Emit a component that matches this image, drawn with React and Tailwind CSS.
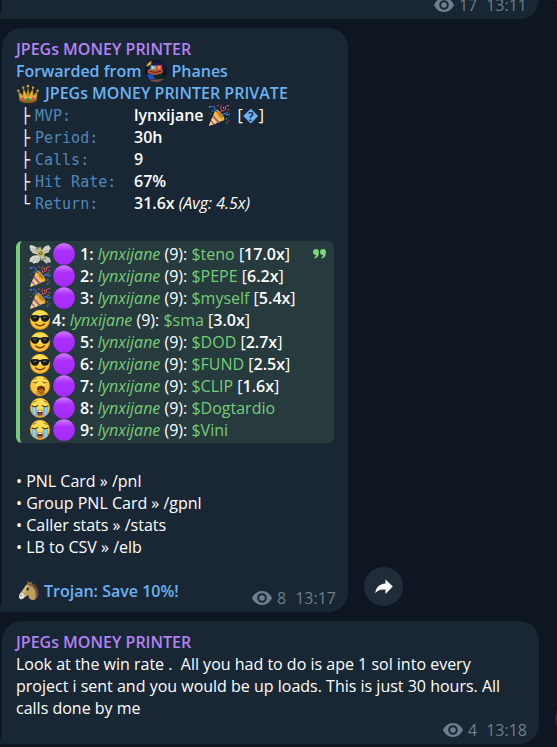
import React from "react";

function Emoji({ label, children, className = "" }) {
  return (
    <svg
      viewBox="0 0 66 66"
      role="img"
      aria-label={label}
      className={"inline-block size-[22px] shrink-0 align-top " + className}
    >
      {children}
    </svg>
  );
}

function Crown() {
  return (
    <Emoji label="crown" className="ml-px">
      <path d="M7 55 L4 27 L17 39 L19 18 L29 36 L33 13 L37 36 L48 18 L49 39 L62 27 L59 55 Q33 67 7 55Z" fill="#a87818" />
      <path d="M9 48 L6 32 L18 44 L21 25 L31 45 L33 18 L35 45 L46 25 L48 44 L60 32 L57 48 Q33 56 9 48Z" fill="#e0b23a" />
      <path d="M8 54 Q33 63 58 54 L57 59 Q33 69 9 59Z" fill="#7f560f" />
      <g fill="#d9aa38">
        <circle cx="4" cy="26" r="3.5" />
        <circle cx="19" cy="17" r="3.5" />
        <circle cx="33" cy="12" r="4" />
        <circle cx="48" cy="17" r="3.5" />
        <circle cx="62" cy="26" r="3.5" />
      </g>
      <circle cx="33" cy="52" r="5" fill="#159a6c" />
      <circle cx="18" cy="49" r="4" fill="#e0468c" />
      <circle cx="48" cy="49" r="4" fill="#e0468c" />
    </Emoji>
  );
}

function Popper() {
  return (
    <Emoji label="party popper">
      <path d="M3 65 L21 20 Q37 27 49 48Z" fill="#f5c343" />
      <path d="M3 65 L12 43 L26 58Z" fill="#fbdc74" />
      <path d="M16 33 L35 55 L30 57 L14 38Z M10 47 L20 61 L16 62 L8 52Z" fill="#9052c4" />
      <path d="M22 19 Q25 12 38 26 Q53 42 48 49 Q40 50 28 36 Q20 26 22 19Z" fill="#eab034" />
      <path d="M28 24 Q31 21 39 31 Q46 41 43 43 Q37 41 31 33Z" fill="#b9782a" />
      <path d="M35 26 Q45 23 39 14 Q35 7 43 3" fill="none" stroke="#e8436e" strokeWidth="3" />
      <path d="M43 34 Q50 25 55 31 Q60 35 65 29" fill="none" stroke="#3f78df" strokeWidth="4" />
      <path d="M28 24 Q18 18 20 11 Q19 5 10 8" fill="none" stroke="#315fbd" strokeWidth="4" />
      <path d="M42 22 L53 16 L52 8 L64 4" fill="none" stroke="#e34a73" strokeWidth="3" />
      <g fill="#4c83e7">
        <path d="M3 5 l6 2 -2 5 -5-2z M12 18 l5 3 -4 4z M53 41 l6 3 -4 4z M52 57 l5-2 2 5z" />
      </g>
      <g fill="#ed4774">
        <path d="M28 2 l5 3 -4 4z M57 17 l6-2 1 5z M58 49 l6 1 -3 4z M3 27 l5 0 -2 4z" />
      </g>
      <path d="M45 8 l4 3 -4 3z M55 23 l5 1 -3 3z" fill="#f3c545" />
    </Emoji>
  );
}

function MoneyWings() {
  return (
    <Emoji label="money with wings">
      <path d="M30 23 Q24 9 5 6 Q-1 12 4 18 Q1 23 9 26 Q8 32 19 32 L28 35Z" fill="#d9dad2" />
      <path d="M38 27 Q44 6 59 7 L66 16 L60 23 Q62 29 51 30 L42 36Z" fill="#cfd0c8" />
      <path d="M28 37 Q11 34 3 46 L1 56 L9 57 L14 62 L21 59 L25 61 Q34 54 35 43Z" fill="#d6d7cf" />
      <path d="M42 41 Q57 37 64 48 L65 59 L57 58 L53 62 L46 56 Q40 53 38 45Z" fill="#c5c6bd" />
      <path d="M6 17 L24 21 M10 25 L26 28 M9 56 L23 43 M21 59 L29 46 M57 21 L44 26 M57 55 L45 45" stroke="#92958c" strokeWidth="2" />
      <path d="M20 16 L35 10 L51 47 L36 54Z" fill="#819062" />
      <path d="M23 19 L34 14 L47 45 L37 50Z" fill="#bac18e" />
      <path d="M25 28 L40 20 L46 36 L31 43Z" fill="#e1bd4e" />
      <circle cx="35" cy="31" r="6" fill="#6d7547" />
      <path d="M32 29 L37 31 L34 34" stroke="#e2c768" strokeWidth="2" fill="none" />
    </Emoji>
  );
}

function Face() {
  return (
    <>
      <circle cx="33" cy="33" r="30" fill="#e99b20" />
      <circle cx="33" cy="31" r="28" fill="#fbc634" />
      <ellipse cx="33" cy="21" rx="22" ry="15" fill="#ffde54" />
    </>
  );
}

function Cool() {
  return (
    <Emoji label="smiling face with sunglasses">
      <Face />
      <path d="M4 20 Q19 15 33 21 Q47 15 62 20 L61 27 Q57 40 46 38 Q37 37 35 26 Q33 24 31 26 Q29 37 19 38 Q9 39 5 27Z" fill="#18191c" />
      <path d="M11 23 L25 23 L17 29Z M41 23 L55 23 L46 29Z" fill="#596069" />
      <path d="M20 45 Q33 56 47 44" fill="none" stroke="#6d350c" strokeWidth="4" strokeLinecap="round" />
    </Emoji>
  );
}

function Yawn() {
  return (
    <Emoji label="yawning face">
      <Face />
      <path d="M14 23 Q20 27 25 21 M41 21 Q46 27 52 23" fill="none" stroke="#603512" strokeWidth="3" strokeLinecap="round" />
      <path d="M13 14 Q17 10 23 11 M43 11 Q49 10 53 14" fill="none" stroke="#9c641e" strokeWidth="2.5" />
      <ellipse cx="36" cy="43" rx="12" ry="11" fill="#6b3412" />
      <path d="M21 60 Q19 50 27 46 L39 42 Q43 42 42 46 L46 47 Q49 50 46 53 Q46 59 37 63 Q27 65 21 60Z" fill="#d8952a" />
      <path d="M28 50 L39 45 M31 54 L43 49 M34 58 L45 53" stroke="#74400f" strokeWidth="2.5" strokeLinecap="round" />
    </Emoji>
  );
}

function Sob() {
  return (
    <Emoji label="loudly crying face">
      <Face />
      <path d="M10 29 H23 V60 Q15 57 10 49Z M43 29 H56 V49 Q51 57 43 60Z" fill="#5db5f1" />
      <path d="M13 30 H18 V56 L13 51Z M48 30 H53 V51 L48 56Z" fill="#9ad8fb" />
      <path d="M9 27 Q17 31 26 26 M40 26 Q49 31 57 27" fill="none" stroke="#60350f" strokeWidth="3.5" strokeLinecap="round" />
      <path d="M13 16 L21 12 M45 12 L53 16" stroke="#a2681d" strokeWidth="3" strokeLinecap="round" />
      <rect x="25" y="39" width="16" height="19" rx="7" fill="#702f18" />
      <path d="M27 42 Q33 38 39 42 L38 45 H28Z" fill="#fff" />
      <ellipse cx="33" cy="54" rx="5" ry="3" fill="#dd625b" />
    </Emoji>
  );
}

function PurpleCircle() {
  return (
    <Emoji label="purple circle" className="ml-0.5">
      <defs>
        <linearGradient id="orb" x1="0" y1="0" x2="0" y2="1">
          <stop offset="0" stopColor="#d07dff" />
          <stop offset="0.35" stopColor="#ac31ff" />
          <stop offset="1" stopColor="#a52aff" />
        </linearGradient>
      </defs>
      <circle cx="33" cy="33" r="32.5" fill="#a126f5" />
      <circle cx="33" cy="32" r="31" fill="url(#orb)" />
    </Emoji>
  );
}

function Horse() {
  return (
    <Emoji label="horse face" className="ml-0.5">
      <path d="M34 8 Q53 8 60 29 Q65 45 57 55 L47 60 L31 24Z" fill="#684338" />
      <path d="M29 13 L29 4 L36 10 L42 5 L42 17 Q55 28 53 47 L52 58 Q42 64 33 55 L31 45 L18 53 Q10 61 4 55 Q2 49 8 38 L20 21 Q23 14 29 13Z" fill="#bca15d" />
      <path d="M23 18 L31 15 L26 30 L12 42 Q14 29 23 18Z" fill="#d5bd78" />
      <path d="M7 38 Q16 37 21 48 L17 54 Q10 61 4 55 Q1 48 7 38Z" fill="#e3dfd8" />
      <path d="M29 4 L34 15 L29 15Z M36 6 L42 4 L43 19Z M32 11 L42 14 L38 22Z" fill="#76503e" />
      <ellipse cx="29" cy="27" rx="3.5" ry="4.5" fill="#201b18" />
      <circle cx="9" cy="46" r="2" fill="#5b4b46" />
      <path d="M43 21 Q58 32 55 53" fill="none" stroke="#8b624e" strokeWidth="3" />
    </Emoji>
  );
}

function Avatar() {
  return (
    <Emoji label="Phanes avatar">
      <clipPath id="avatar-clip">
        <circle cx="33" cy="33" r="33" />
      </clipPath>
      <g clipPath="url(#avatar-clip)">
        <rect width="66" height="66" fill="#10142b" />
        <path d="M14 17 Q31 -4 56 12 L61 31 L13 30Z" fill="#171c52" />
        <path d="M4 16 Q5 4 20 3 L18 13 L7 20Z" fill="#e1b332" />
        <path d="M8 29 Q20 20 50 25 L55 35 Q45 48 25 45 L8 39Z" fill="#b4542f" />
        <path d="M17 16 L33 17 L33 29 L16 29Z" fill="#48bdcf" />
        <path d="M34 16 L51 16 L50 30 L34 29Z" fill="#f0502f" />
        <path d="M20 19 L27 19 L26 26 L21 27Z" fill="#f0ca60" />
        <path d="M39 18 L46 18 L43 27 L39 26Z" fill="#f69b42" />
        <path d="M15 34 Q30 42 49 33" stroke="#5a2418" strokeWidth="3" fill="none" />
        <path d="M5 43 L20 42 L32 57 L12 57Z" fill="#1455cb" />
        <path d="M26 46 L49 41 L60 55 L36 59Z" fill="#10271f" />
        <path d="M5 57 Q31 61 61 55 L54 66 H12Z" fill="#765044" />
      </g>
    </Emoji>
  );
}

function Tail() {
  return (
    <svg viewBox="0 0 8 10" aria-hidden="true" className="absolute bottom-0 -left-2 h-2.5 w-2">
      <path d="M8 0 Q7 7 0 10 H8Z" fill="#192633" />
    </svg>
  );
}

function Meta({ views, time }) {
  return (
    <div className="-mr-0.5 flex h-[21px] items-center justify-end self-end text-[#6d7f8f]">
      <svg viewBox="0 0 20 14" aria-hidden="true" className="mr-[5px] h-3.5 w-5">
        <path
          fillRule="evenodd"
          fill="currentColor"
          d="M10 0 C5.5 0 1.8 2.8 0 7 C1.8 11.2 5.5 14 10 14 S18.2 11.2 20 7 C18.2 2.8 14.5 0 10 0Z M10 2.2 A4.8 4.8 0 1 1 10 11.8 A4.8 4.8 0 1 1 10 2.2Z M10 4.2 A2.8 2.8 0 1 0 10 9.8 A2.8 2.8 0 1 0 10 4.2Z"
        />
      </svg>
      <span>{views}</span>
      <time className="ml-[9px]">{time}</time>
    </div>
  );
}

function Message({ width, className = "", children }) {
  return (
    <article className={"flex items-end gap-4 pl-0.5 " + className}>
      <div className={"relative min-w-0 shrink-0 rounded-[20px] rounded-bl-none bg-[#192633] px-3.5 pt-2.5 pb-1 " + width}>
        {children}
        <Tail />
      </div>
      <button
        type="button"
        aria-label="Share message"
        className="mb-1.5 flex size-[39px] shrink-0 items-center justify-center rounded-full bg-[#202d39]"
      >
        <svg viewBox="0 0 18 16" aria-hidden="true" className="h-4 w-[18px]">
          <path d="M10.5 0.5 L17.8 7.5 L10.5 15 V10.7 C5.8 10.3 3 11.3 0.3 14.2 C0.7 8.6 4.4 5 10.5 4.5Z" fill="#fff" />
        </svg>
      </button>
    </article>
  );
}

const Author = () => <h2 className="font-semibold text-[#b383f3]">JPEGs MONEY PRINTER</h2>;

function Stat({ branch = "├", label, children }) {
  return (
    <div className="flex h-[22px]">
      <span aria-hidden="true" className="w-[19px] pl-[5px] font-['DejaVu_Sans_Mono',monospace] text-[15px] leading-6">{branch}</span>
      <dt className="w-[99px] font-['DejaVu_Sans_Mono',monospace] text-[15px] leading-6 text-[#5288b8]">{label}</dt>
      <dd className="flex font-semibold">{children}</dd>
    </div>
  );
}

const calls = [
  { icon: MoneyWings, coin: "$teno", gain: "17.0x" },
  { icon: Popper, coin: "$PEPE", gain: "6.2x" },
  { icon: Popper, coin: "$myself", gain: "5.4x" },
  { icon: Cool, coin: "$sma", gain: "3.0x", plain: true },
  { icon: Cool, coin: "$DOD", gain: "2.7x" },
  { icon: Cool, coin: "$FUND", gain: "2.5x" },
  { icon: Yawn, coin: "$CLIP", gain: "1.6x" },
  { icon: Sob, coin: "$Dogtardio" },
  { icon: Sob, coin: "$Vini" },
];

const commands = [
  ["PNL Card", "/pnl"],
  ["Group PNL Card", "/gpnl"],
  ["Caller stats", "/stats"],
  ["LB to CSV", "/elb"],
];

function CallRow({ call, rank }) {
  const Icon = call.icon;
  return (
    <li className="flex">
      <Icon />
      {!call.plain && <PurpleCircle />}
      <span className={call.plain ? "ml-px" : "ml-[5px]"}>
        <b className="font-semibold">{rank}:</b>{" "}
        <a href="#lynxijane" className="font-medium text-[#77cc79] italic">lynxijane</a> (9):{" "}
        <a href="#coin" className="font-medium text-[#77cc79]">{call.coin}</a>
        {call.gain && (
          <>
            {" "}[<b className="font-semibold">{call.gain}</b>]
          </>
        )}
      </span>
    </li>
  );
}

export default function App() {
  return (
    <main className="flex min-h-screen flex-col gap-[9px] overflow-hidden bg-[#0e1621] font-['Open_Sans','DejaVu_Sans',sans-serif] text-base leading-[22px] text-white">
      <Message width="w-[537px]" className="-mt-8">
        <div className="h-4" />
        <Meta views="17" time="13:11" />
      </Message>

      <Message width="w-[346px]">
        <Author />
        <p className="flex font-semibold text-[#6ab3f3]">
          <span className="mr-1">Forwarded from</span>
          <Avatar />
          <a href="#phanes" className="ml-1">Phanes</a>
        </p>
        <p className="flex font-semibold text-[#6ab3f3]">
          <Crown />
          <a href="#group" className="ml-1.5">JPEGs MONEY PRINTER PRIVATE</a>
        </p>
        <dl>
          <Stat label="MVP:">
            <span className="mr-1">lynxijane</span>
            <Popper />
            <span className="ml-2 font-normal">
              [<a href="#mvp" className="text-[#6ab3f3]">&#xFFFD;</a>]
            </span>
          </Stat>
          <Stat label="Period:">30h</Stat>
          <Stat label="Calls:">9</Stat>
          <Stat label="Hit Rate:">67%</Stat>
          <Stat branch="└" label="Return:">
            <span>31.6x <i className="font-normal">(Avg: 4.5x)</i></span>
          </Stat>
        </dl>

        <blockquote className="mt-[27px] mb-[27px] flex justify-between rounded-md border-l-4 border-[#77cc79] bg-[#273a3d] py-0.5 pr-2 pl-[9px]">
          <ol>
            {calls.map((call, i) => (
              <CallRow key={call.coin} call={call} rank={i + 1} />
            ))}
          </ol>
          <svg viewBox="0 0 13 10" aria-hidden="true" className="mt-1.5 h-2.5 w-[13px]">
            <path
              fill="#7cd680"
              d="M3 0 A3 3 0 0 1 6 3 C6 6.5 4.5 9 1.8 9.5 L1.2 8.5 C2.5 7.8 3 7 3 6 A3 3 0 0 1 3 0Z M10 0 A3 3 0 0 1 13 3 C13 6.5 11.5 9 8.8 9.5 L8.2 8.5 C9.5 7.8 10 7 10 6 A3 3 0 0 1 10 0Z"
            />
          </svg>
        </blockquote>

        <ul>
          {commands.map(([name, command]) => (
            <li key={command}>
              • {name} » <a href={"#" + command}>{command}</a>
            </li>
          ))}
        </ul>

        <div className="mt-[22px] flex justify-between">
          <p className="mb-1.5 flex font-semibold text-[#6ab3f3]">
            <Horse />
            <a href="#trojan" className="ml-1">Trojan: Save 10%!</a>
          </p>
          <Meta views="8" time="13:17" />
        </div>
      </Message>

      <Message width="w-[537px]">
        <Author />
        <p className="whitespace-pre-wrap">
          {"Look at the win rate .  All you had to do is ape 1 sol into every project i sent and you would be up loads. This is just 30 hours. All calls done by me"}
        </p>
        <Meta views="4" time="13:18" />
      </Message>
    </main>
  );
}
